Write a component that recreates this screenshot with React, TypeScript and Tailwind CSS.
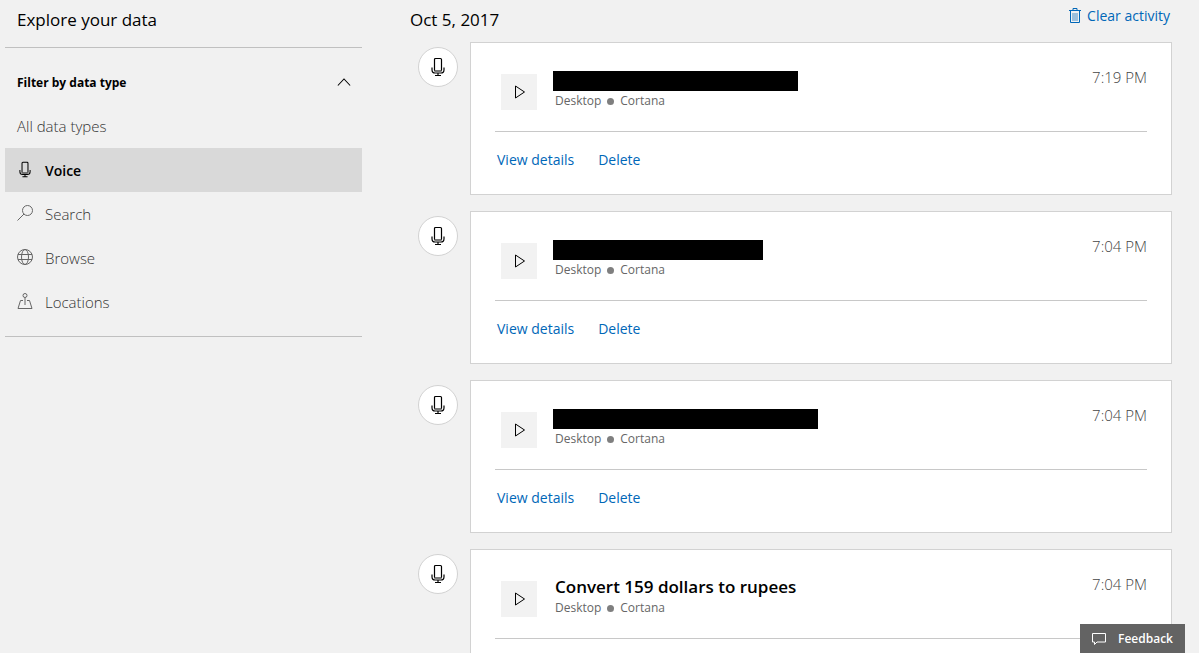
import type { ReactNode } from "react";

type IconProps = { className?: string };

function Glyph({ className = "", box = "0 0 16 16", children }: IconProps & { box?: string; children: ReactNode }) {
  return (
    <svg viewBox={box} className={className} fill="none" stroke="currentColor" aria-hidden="true">
      {children}
    </svg>
  );
}

function MicIcon({ className }: IconProps) {
  return (
    <Glyph className={className} box="0 0 14 20">
      <rect x="3.5" y="1.5" width="7" height="12.500" rx="1" strokeWidth="1.2" />
      <path d="M1 10.500v2.200c0 2 1.300 3.300 3.200 3.300h5.600c1.900 0 3.200-1.300 3.200-3.300v-2.200M7 16v2.500M4 18.500h6" strokeWidth="1.200" />
      <path d="M3.500 14h7" strokeWidth="1.500" stroke="#777777" />
    </Glyph>
  );
}

function SearchIcon({ className }: IconProps) {
  return (
    <Glyph className={className}>
      <circle cx="10.500" cy="5.500" r="5" />
      <path d="M7 9 .5 15.500" />
    </Glyph>
  );
}

function GlobeIcon({ className }: IconProps) {
  return (
    <Glyph className={className}>
      <circle cx="8" cy="8" r="7.500" />
      <ellipse cx="8" cy="8" rx="3.500" ry="7.500" />
      <path d="M1 5.500h14M1 10.500h14" />
    </Glyph>
  );
}

function LocationIcon({ className }: IconProps) {
  return (
    <Glyph className={className}>
      <circle cx="8" cy="2.500" r="2" />
      <path d="M8 4.500V12M6 7.500H3.500L1 15.500h14l-2.500-8H10" />
    </Glyph>
  );
}

function TrashIcon({ className }: IconProps) {
  return (
    <Glyph className={className} box="0 0 12 16">
      <path d="M0 2.500h12M4 2.500v-2h4v2M1.500 2.500v12h9v-12" />
      <path d="M4 5v8M6 5v8M8 5v8" strokeOpacity="0.700" />
    </Glyph>
  );
}

const filters = [
  { label: "Voice", icon: <MicIcon className="h-[17px] w-3" />, active: true },
  { label: "Search", icon: <SearchIcon className="size-4" />, active: false },
  { label: "Browse", icon: <GlobeIcon className="size-4" />, active: false },
  { label: "Locations", icon: <LocationIcon className="size-4" />, active: false },
];

type Activity = { id: number; time: string; title?: string; barWidth?: number };

const activities: Activity[] = [
  { id: 1, time: "7:19 PM", barWidth: 245 },
  { id: 2, time: "7:04 PM", barWidth: 210 },
  { id: 3, time: "7:04 PM", barWidth: 265 },
  { id: 4, time: "7:04 PM", title: "Convert 159 dollars to rupees" },
];

function ActivityRow({ activity }: { activity: Activity }) {
  return (
    <li className="flex items-start gap-3">
      <div className="mt-[5px] flex size-10 shrink-0 items-center justify-center rounded-full border border-[#d2d2d2] bg-white text-black">
        <MicIcon className="h-5 w-3.5" />
      </div>
      <article className="min-w-0 flex-1 border border-[#d2d2d2] bg-white px-6 pt-7 pb-[22px]">
        <div className="flex h-[61px] items-start border-b border-[#c8c8c8] pl-1.5">
          <button
            type="button"
            aria-label="Play recording"
            className="mt-[3px] flex size-9 shrink-0 items-center justify-center bg-[#f2f2f2] pl-0.5 text-black"
          >
            <Glyph className="h-3.5 w-3" box="0 0 12 14">
              <path d="M1.500 1v12l9-6z" />
            </Glyph>
          </button>
          <div className="ml-4 min-w-0 flex-1">
            {activity.title ? (
              <h3 className="pb-0.5 pl-0.5 text-[17px] leading-[18px] font-semibold text-black">{activity.title}</h3>
            ) : (
              <div className="h-5 bg-black" style={{ width: activity.barWidth }} />
            )}
            <p className="flex items-center gap-1.5 pl-0.5 text-xs leading-5 text-[#666666]">
              Desktop
              <span className="size-[7px] rounded-full bg-[#7f7f7f]" />
              Cortana
            </p>
          </div>
          <time className="text-[15px] leading-3 font-light text-[#444444]">{activity.time}</time>
        </div>
        <div className="flex gap-6 pt-4 pl-0.5 text-sm leading-6 text-[#0067b8]">
          <a href="#details">View details</a>
          <a href="#delete">Delete</a>
        </div>
      </article>
    </li>
  );
}

export default function App() {
  return (
    <div className="h-screen overflow-y-auto bg-[#f1f1f1] pb-4 font-['Open_Sans','Noto_Sans',sans-serif] [scrollbar-width:none]">
      <div className="flex items-start gap-12 pr-[27px] pl-[5px]">
        <aside className="w-[357px] shrink-0">
          <h1 className="h-12 border-b border-[#c0c0c0] pt-2 pl-3 text-[17px] leading-6 text-black">
            Explore your data
          </h1>
          <nav aria-label="Data types" className="border-b border-[#c0c0c0] py-3">
            <button type="button" className="flex h-11 w-full items-center justify-between pr-[11px] pl-3 text-xs font-bold text-black">
              <span className="pt-0.5">Filter by data type</span>
              <Glyph className="size-3.5">
                <path d="m1 12 7-7.500 7 7.500" strokeWidth="1.200" />
              </Glyph>
            </button>
            <a href="#all" className="flex h-11 items-center pl-3 text-[15px] font-light text-[#333333]">
              All data types
            </a>
            {filters.map((f) => (
              <a
                key={f.label}
                href="#filter"
                aria-current={f.active ? "page" : undefined}
                className={
                  f.active
                    ? "flex h-11 items-center gap-3 bg-[#d9d9d9] pt-0.5 pl-3 text-sm font-semibold text-black"
                    : "flex h-11 items-center gap-3 pl-3 text-[15px] font-light text-[#333333]"
                }
              >
                <span className={f.active ? "flex w-4 justify-center pb-1" : "flex w-4 justify-center pb-0.5 text-[#666666]"}>
                  {f.icon}
                </span>
                {f.label}
              </a>
            ))}
          </nav>
        </aside>
        <main className="min-w-0 flex-1">
          <div className="flex h-[42px] items-start justify-between">
            <h2 className="pt-2 text-[17px] leading-6 text-black">Oct 5, 2017</h2>
            <button type="button" className="flex items-center gap-1.5 pt-1 pr-0.5 text-sm leading-6 text-[#0067b8]">
              <TrashIcon className="h-4 w-3" />
              Clear activity
            </button>
          </div>
          <ul className="flex flex-col gap-4 pl-2">
            {activities.map((a) => (
              <ActivityRow key={a.id} activity={a} />
            ))}
          </ul>
        </main>
      </div>
      <button
        type="button"
        className="fixed right-3.5 bottom-0 flex h-[29px] items-center gap-3 bg-[#636363] px-3 text-xs font-semibold text-white"
      >
        <Glyph className="h-3.5 w-3.5" box="0 0 14 14">
          <path d="M.5 1.500h13v8.500H5l-2.500 2.500V10h-2z" />
        </Glyph>
        Feedback
      </button>
    </div>
  );
}
